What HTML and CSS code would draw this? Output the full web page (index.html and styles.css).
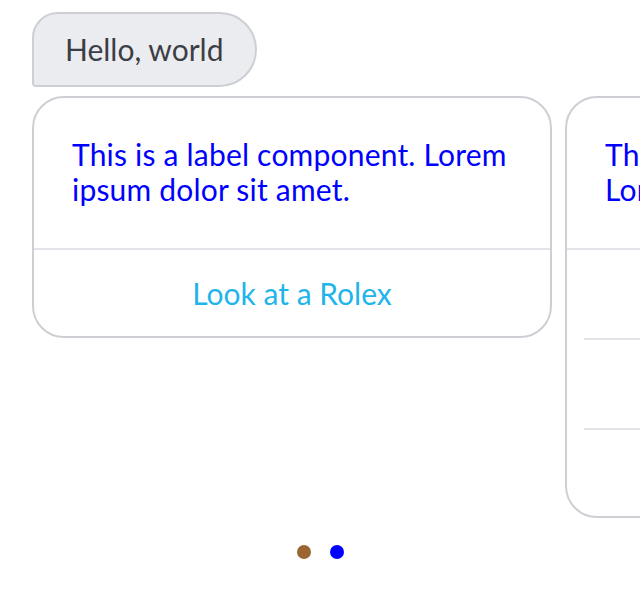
FILE: index.html
```html
<!DOCTYPE html>
<html>
<head>
<meta charset="utf-8">
<link rel="stylesheet" href="styles.css">
</head>
<body>
<div class="page">
  <div class="bubble">Hello, world</div>
  <div class="carousel">
    <div class="card">
      <div class="card-body">This is a label component. Lorem ipsum dolor sit amet.</div>
      <div class="card-btn">Look at a Rolex</div>
    </div>
    <div class="card">
      <div class="card-body">This is another label component. Lorem ipsum dolor sit amet.</div>
      <div class="card-btn"></div>
      <div class="card-btn inset"></div>
      <div class="card-btn inset"></div>
    </div>
  </div>
  <div class="dots">
    <span class="dot brown"></span>
    <span class="dot blue"></span>
  </div>
</div>
</body>
</html>
```
FILE: styles.css
```css
html, body {
  margin: 0;
  padding: 0;
  background: #ffffff;
  font-family: Lato, "Open Sans", sans-serif;
}
.page {
  width: 640px;
  height: 598px;
  overflow: hidden;
  padding-top: 12px;
  box-sizing: border-box;
}
.bubble {
  display: inline-block;
  margin-left: 32px;
  height: 75px;
  box-sizing: border-box;
  padding: 0 31px;
  background: #ebecf0;
  border: 2px solid #cdcfd4;
  border-radius: 26px 38px 38px 4px;
  color: #3b3e45;
  font-size: 30px;
  line-height: 71px;
}
.carousel {
  display: flex;
  gap: 13px;
  padding-left: 32px;
  margin-top: 9px;
  align-items: flex-start;
}
.card {
  flex: 0 0 520px;
  box-sizing: border-box;
  border: 2px solid #cdcfd4;
  border-radius: 32px;
  background: #fff;
  overflow: hidden;
}
.card-body {
  padding: 39px 38px 41px 38px;
  font-size: 30px;
  line-height: 35px;
  letter-spacing: 0.2px;
  color: #0000ff;
}
.card-btn {
  height: 88px;
  border-top: 2px solid #e2e3e8;
  display: flex;
  align-items: center;
  justify-content: center;
  color: #1fb4ea;
  font-size: 30px;
}
.card-btn:last-child {
  height: 86px;
}
.card-btn.inset {
  margin-left: 17px;
}
.dots {
  display: flex;
  justify-content: center;
  gap: 19px;
  margin-top: 27px;
}
.dot {
  width: 14px;
  height: 14px;
  border-radius: 50%;
}
.dot.brown { background: #9b6432; }
.dot.blue { background: #0000ff; }
```
